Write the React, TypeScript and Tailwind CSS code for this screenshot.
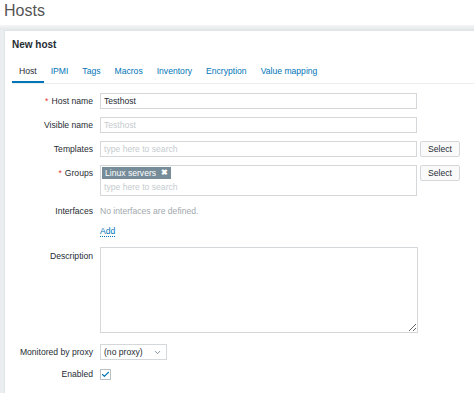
import { ChevronDown, Check } from 'lucide-react'

const tabs = ['Host', 'IPMI', 'Tags', 'Macros', 'Inventory', 'Encryption', 'Value mapping']

function Label({ children, required }: { children: string; required?: boolean }) {
  return (
    <div className="w-[88px] shrink-0 whitespace-nowrap text-right text-[#1f2c33]">
      {required ? <span className="mr-[3px] text-[#e33734]">*</span> : null}
      {children}
    </div>
  )
}

export default function App() {
  return (
    <div className="h-[393px] w-[474px] overflow-hidden bg-[#ebeef0] font-['Liberation_Sans',Arial,sans-serif] text-[8.6px]">
      <div className="h-[25px] bg-white px-[4px] pt-[1px] text-[16px] leading-[20px] text-[#555]">Hosts</div>
      <div className="h-[5px] bg-gradient-to-b from-[#f3f5f6] to-[#e4e7e9]" />
      <div className="ml-[4px] h-full border-t border-l border-[#dfe4e7] bg-white pl-[7px]">
        <div className="pt-[8px] text-[10px] font-bold leading-[12px] text-[#1f2c33]">New host</div>

        <div className="mt-[15px] flex border-b border-[#ebeef0]">
          {tabs.map((t, i) => (
            <div
              key={t}
              className={
                i === 0
                  ? 'border-b-2 border-[#0275b8] px-[7px] pb-[4px] leading-[11px] text-[#1f2c33]'
                  : 'border-b-2 border-transparent px-[7px] pb-[4px] leading-[11px] text-[#0275b8]'
              }
            >
              {t}
            </div>
          ))}
        </div>

        <div className="-ml-[7px] mt-[9px] flex flex-col">
          <div className="flex h-[16px] items-center">
            <Label required>Host name</Label>
            <div className="ml-[7px] flex h-[16px] w-[317px] items-center border border-[#d5d8da] px-[3px] text-[#1f2c33]">
              Testhost
            </div>
          </div>

          <div className="mt-[8px] flex h-[16px] items-center">
            <Label>Visible name</Label>
            <div className="ml-[7px] flex h-[16px] w-[317px] items-center border border-[#d5d8da] px-[3px] text-[#c5cbce]">
              Testhost
            </div>
          </div>

          <div className="mt-[8px] flex h-[16px] items-center">
            <Label>Templates</Label>
            <div className="ml-[7px] flex h-[16px] w-[317px] items-center border border-[#d5d8da] px-[3px] text-[#c5cbce]">
              type here to search
            </div>
            <div className="ml-[3px] flex h-[16px] w-[40px] items-center justify-center rounded-[2px] border border-[#d5d8da] bg-[#fafafa] text-[#1f2c33]">
              Select
            </div>
          </div>

          <div className="mt-[8px] flex items-start">
            <div className="flex h-[16px] items-center">
              <Label required>Groups</Label>
            </div>
            <div className="ml-[7px] flex h-[31px] w-[317px] flex-col items-start border border-[#d5d8da] px-[1px] pt-[1px]">
              <div className="flex h-[12px] items-center gap-[5px] whitespace-nowrap bg-[#768d99] px-[3px] text-white">
                <span>Linux servers</span>
                <span className="text-[8px] font-bold">✖</span>
              </div>
              <div className="mt-[2px] px-[2px] leading-[12px] text-[#c5cbce]">type here to search</div>
            </div>
            <div className="ml-[3px] flex h-[16px] w-[40px] items-center justify-center rounded-[2px] border border-[#d5d8da] bg-[#fafafa] text-[#1f2c33]">
              Select
            </div>
          </div>

          <div className="mt-[9px] flex h-[12px] items-center">
            <Label>Interfaces</Label>
            <div className="ml-[7px] text-[#a1a9ad]">No interfaces are defined.</div>
          </div>

          <div className="mt-[8px] flex h-[12px] items-center">
            <div className="w-[88px] shrink-0" />
            <div className="ml-[7px] border-b border-dotted border-[#0275b8] leading-[10px] text-[#0275b8]">Add</div>
          </div>

          <div className="mt-[10px] flex items-start">
            <div className="pt-[3px]">
              <Label>Description</Label>
            </div>
            <textarea
              readOnly
              className="ml-[7px] h-[86px] w-[318px] border border-[#d5d8da] outline-none"
            />
          </div>

          <div className="mt-[11px] flex h-[16px] items-center">
            <Label>Monitored by proxy</Label>
            <div className="ml-[7px] flex h-[16px] w-[67px] items-center justify-between border border-[#d5d8da] pl-[3px] pr-[4px] text-[#1f2c33]">
              <span>(no proxy)</span>
              <ChevronDown size={9} strokeWidth={2} className="text-[#5a6b74]" />
            </div>
          </div>

          <div className="mt-[8px] flex h-[12px] items-center">
            <Label>Enabled</Label>
            <div className="ml-[7px] flex h-[11px] w-[11px] items-center justify-center border border-[#b8c0c4] bg-white">
              <Check size={9} strokeWidth={3} className="text-[#0275b8]" />
            </div>
          </div>
        </div>
      </div>
    </div>
  )
}
